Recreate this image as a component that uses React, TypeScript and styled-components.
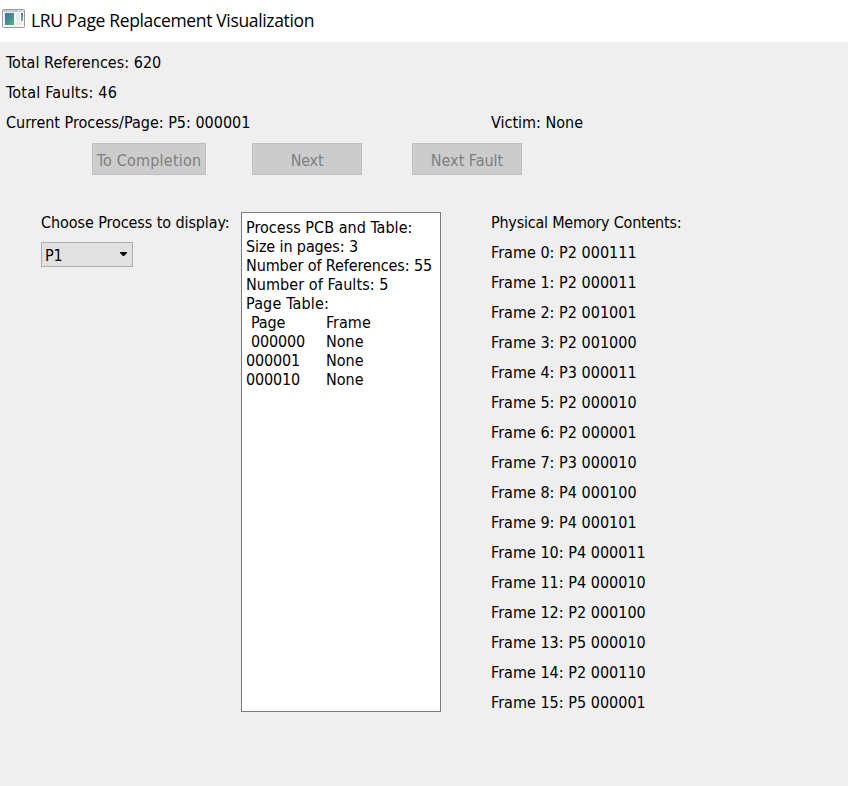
import React from "react";
import styled, { createGlobalStyle } from "styled-components";

const GlobalStyle = createGlobalStyle`
  * { box-sizing: border-box; }
  body {
    margin: 0;
    background: #efefef;
    color: #000;
    font-family: "DejaVu Sans Condensed", "DejaVu Sans", Tahoma, sans-serif;
    font-size: 16px;
  }
`;

const Window = styled.div`
  display: flex;
  flex-direction: column;
  height: 786px;
  overflow: hidden;
  background: #efefef;
`;

const TitleBar = styled.header`
  display: flex;
  align-items: flex-start;
  flex: none;
  height: 42px;
  padding: 9px 0 0 2px;
  background: #fff;
`;

const Title = styled.h1`
  margin: -1px 0 0 6px;
  font: 400 17.5px/24px "Open Sans", "Segoe UI", sans-serif;
  letter-spacing: -0.35px;
  white-space: nowrap;
`;

const Summary = styled.section`
  display: grid;
  grid-template-columns: 485px auto;
  justify-content: start;
  padding: 5px 0 0 6px;
`;

const Label = styled.div<{ $track?: number; $wide?: boolean }>`
  height: 30px;
  line-height: 32px;
  white-space: nowrap;
  letter-spacing: ${(p) => p.$track ?? 0}px;
  ${(p) => (p.$wide ? "grid-column: 1 / -1;" : "")}
`;

const Actions = styled.div`
  display: grid;
  grid-template-columns: 160px 160px 110px;
  justify-items: start;
  margin: 6px 0 0 92px;
`;

const ActionButton = styled.button<{ $width?: number; $track?: number }>`
  width: ${(p) => p.$width ?? 110}px;
  height: 32px;
  padding: 3px 0 0;
  border: 1px solid #bfbfbf;
  background: #ccc;
  color: #7f7f7f;
  font: inherit;
  line-height: 27px;
  letter-spacing: ${(p) => p.$track ?? 0}px;
  white-space: nowrap;
`;

const Panels = styled.main`
  display: grid;
  grid-template-columns: 200px 250px auto;
  justify-content: start;
  align-items: start;
  margin: 32px 0 0 41px;
`;

const ProcessSelect = styled.button`
  display: flex;
  align-items: center;
  justify-content: space-between;
  width: 92px;
  height: 25px;
  margin-top: 5px;
  padding: 2px 5px 0 3px;
  border: 1px solid #adadad;
  background: #e1e1e1;
  color: #000;
  font: inherit;
  line-height: 22px;
  letter-spacing: -0.2px;

  svg { margin-bottom: 3px; }
`;

const Report = styled.div`
  width: 200px;
  height: 500px;
  margin-top: 5px;
  padding: 5px 4px;
  border: 1px solid #7a7a7a;
  background: #fff;
`;

const ReportLine = styled.div<{ $track?: number }>`
  height: 19px;
  line-height: 19px;
  white-space: pre;
  letter-spacing: ${(p) => p.$track ?? 0}px;
`;

const TableLine = styled.div`
  display: grid;
  grid-template-columns: 80px auto;
  justify-content: start;
  height: 19px;
  line-height: 19px;
  white-space: pre;
`;

const PageCell = styled.span<{ $indent?: boolean }>`
  padding-left: ${(p) => (p.$indent ? 5 : 0)}px;
  letter-spacing: -0.14px;
`;

const frames = [
  "P2 000111", "P2 000011", "P2 001001", "P2 001000",
  "P3 000011", "P2 000010", "P2 000001", "P3 000010",
  "P4 000100", "P4 000101", "P4 000011", "P4 000010",
  "P2 000100", "P5 000010", "P2 000110", "P5 000001",
];

const pageTable = [
  { page: "Page", frame: "Frame", indent: true },
  { page: "000000", frame: "None", indent: true },
  { page: "000001", frame: "None", indent: false },
  { page: "000010", frame: "None", indent: false },
];

function AppIcon() {
  return (
    <svg width="23" height="19" viewBox="0 0 23 19">
      <defs>
        <linearGradient id="pane" x1="0" y1="0" x2="1" y2="1">
          <stop offset="0" stopColor="#46719f" />
          <stop offset="0.5" stopColor="#468e91" />
          <stop offset="1" stopColor="#5cb86c" />
        </linearGradient>
        <linearGradient id="strip" x1="0" y1="0" x2="0" y2="1">
          <stop offset="0" stopColor="#4477b5" />
          <stop offset="1" stopColor="#79bb83" />
        </linearGradient>
      </defs>
      <rect x="0.5" y="0.5" width="22" height="18" rx="0.8" fill="#f8f8f9" stroke="#959ba3" />
      <rect x="1" y="1" width="21" height="2" fill="#c5cbd4" />
      <path d="M16 1.5h1M18 1.5h1M20 1.5h1" stroke="#fff" strokeWidth="1" />
      <rect x="2.5" y="3.5" width="10" height="13" fill="#d9dfe2" />
      <rect x="3" y="4" width="9" height="12" fill="url(#pane)" />
      <rect x="14" y="4" width="4" height="7" fill="#e9e9e9" />
      <rect x="14" y="12" width="7" height="4" fill="#ececec" />
      <rect x="19" y="4" width="2" height="8" fill="url(#strip)" />
    </svg>
  );
}

export default function App() {
  return (
    <Window>
      <GlobalStyle />
      <TitleBar>
        <AppIcon />
        <Title>LRU Page Replacement Visualization</Title>
      </TitleBar>
      <Summary>
        <Label $wide $track={0.03}>Total References: 620</Label>
        <Label $wide $track={0.22}>Total Faults: 46</Label>
        <Label>Current Process/Page: P5: 000001</Label>
        <Label>Victim: None</Label>
      </Summary>
      <Actions>
        <ActionButton disabled $width={114} $track={0.2}>To Completion</ActionButton>
        <ActionButton disabled $track={-0.2}>Next</ActionButton>
        <ActionButton disabled>Next Fault</ActionButton>
      </Actions>
      <Panels>
        <div>
          <Label $track={-0.08}>Choose Process to display:</Label>
          <ProcessSelect>
            P1
            <svg width="7" height="4" viewBox="0 0 7 4">
              <path d="M0 0h7v1L4 4H3L0 1z" fill="#000" />
            </svg>
          </ProcessSelect>
        </div>
        <Report>
          <ReportLine $track={0.03}>Process PCB and Table:</ReportLine>
          <ReportLine $track={-0.12}>Size in pages: 3</ReportLine>
          <ReportLine $track={-0.1}>Number of References: 55</ReportLine>
          <ReportLine $track={0.06}>Number of Faults: 5</ReportLine>
          <ReportLine $track={0.17}>Page Table:</ReportLine>
          {pageTable.map((row) => (
            <TableLine key={row.page}>
              <PageCell $indent={row.indent}>{row.page}</PageCell>
              <span>{row.frame}</span>
            </TableLine>
          ))}
        </Report>
        <div>
          <Label $track={-0.22}>Physical Memory Contents:</Label>
          {frames.map((content, i) => (
            <Label key={i} $track={0.02}>{`Frame ${i}: ${content}`}</Label>
          ))}
        </div>
      </Panels>
    </Window>
  );
}
